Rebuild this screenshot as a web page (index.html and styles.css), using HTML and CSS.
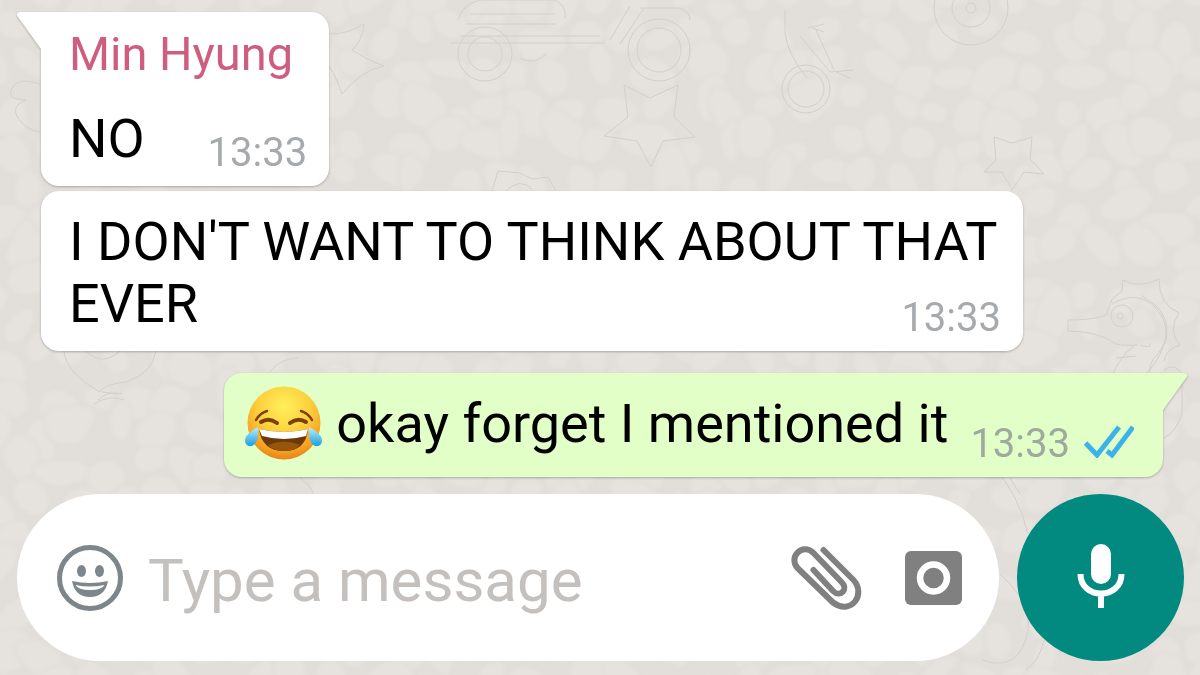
FILE: index.html
```html
<!DOCTYPE html>
<html lang="en">
<head>
    <meta charset="UTF-8">
    <meta name="viewport" content="width=device-width, initial-scale=1.0">
    <title>Chat</title>
    <link rel="stylesheet" href="styles.css">
</head>
<body>
    <!-- Wallpaper: pebbles are added by wallpaper.js, doodles sit on top -->
    <svg class="wallpaper" viewBox="0 0 1200 675" preserveAspectRatio="xMidYMid slice" aria-hidden="true">
        <g id="pebbles" class="pebbles"></g>
        <g class="doodles">
            <!-- car -->
            <path d="M450 43h155M460 36h140M458 20q4-16 22-20h75q12 6 10 18M470 14h85M466 24h90M610 40l20-34M620 44l24-36M640 8h40q10 4 10 12"/>
            <circle cx="485" cy="54" r="27"/>
            <circle cx="485" cy="54" r="17"/>
            <circle cx="659" cy="50" r="31"/>
            <circle cx="659" cy="50" r="22"/>
            <path d="M520 58q14 8 26-4"/>
            <!-- stars -->
            <path d="M624 85l26 13 28-13-4 32 21 20-32 4-12 26-14-26-33-5 24-19z"/>
            <path d="M994 137l18 6 20-6-2 22 14 15-20-2-12 18-10-18-18 0 12-12z"/>
            <!-- wheel -->
            <circle cx="971" cy="8" r="37"/>
            <circle cx="971" cy="8" r="19"/>
            <circle cx="971" cy="8" r="5"/>
            <!-- bird -->
            <circle cx="806" cy="89" r="24"/>
            <circle cx="806" cy="89" r="18"/>
            <path d="M785 10v22q2 22 22 46M800 36l30 36M816 30l18 40M808 28l16-4M812 28l12 4M830 72l24-2M836 72l14 6"/>
            <!-- fish and flowers -->
            <path d="M330 34q18 0 34-10-2 18-12 26 14 10 32 16-22 4-42 28-8-24-18-34"/>
            <path d="M40 84q-22-8-28 4t14 12q-16 6-8 18t22 14"/>
            <path d="M492 191l6-20 22 2 12 6 16-2 8 14M506 191q14-14 26-2"/>
            <!-- radish -->
            <path d="M64 351q2 22 36 41q4-8 26-10 26-8 30-31M86 351q16 16 34 0M98 400q10-10 24-6M94 404q16-10 30-4M102 392l16 2"/>
            <!-- seahorse -->
            <path d="M1068 320v11q30 0 48 13 8 2 22 1M1068 320q26 0 38-5l6-16 10-8 1-11q16 9 36-1 0 26 20 34-12 18 1 32-14 4-16 16M1112 304q24-14 42 2 22 24 4 48-10 8-8 22M1142 296q30 16 24 44-8 22-20 34M1140 345q12 4 10-2M1134 346q-14 10-22 30M1164 370q10-8 18 4v40q-6 18-18 24M1116 358l20-2"/>
            <circle cx="1122" cy="316" r="11"/>
            <circle cx="1120" cy="316" r="3"/>
            <!-- lower swirls -->
            <path d="M996 470q22 24 32 64M1000 574q42 38 22 74-12 22-40 12M1044 640q-4 20-18 30M300 477q10 8 14 17M270 372q10-14 28-14M1010 478l10 16"/>
        </g>
    </svg>

    <div class="chat-screen">
        <main class="messages">
            <article class="bubble received">
                <svg class="tail" viewBox="0 0 25 38" aria-hidden="true"><path d="M25 0H3Q-2 1 1 5L24 37V38H25z"/></svg>
                <h2 class="sender">Min Hyung</h2>
                <p class="text">NO <time class="time">13:33</time></p>
            </article>

            <article class="bubble received">
                <p class="text">I DON'T WANT TO THINK ABOUT THAT EVER <time class="time">13:33</time></p>
            </article>

            <article class="bubble sent">
                <svg class="tail" viewBox="0 0 25 38" aria-hidden="true"><path d="M0 0H22Q27 1 24 5L1 37V38H0z"/></svg>
                <p class="text">
                    <svg class="emoji" viewBox="0 0 79 74" role="img" aria-label="Face with tears of joy">
                        <defs>
                            <radialGradient id="face" cx="50%" cy="28%" r="72%">
                                <stop offset="0" stop-color="#fff05c"/>
                                <stop offset="0.5" stop-color="#fdcf3c"/>
                                <stop offset="0.85" stop-color="#f6a020"/>
                                <stop offset="1" stop-color="#e5831a"/>
                            </radialGradient>
                            <linearGradient id="tear" x1="0" y1="0" x2="0" y2="1">
                                <stop offset="0" stop-color="#b9eefc"/>
                                <stop offset="1" stop-color="#1c9ee0"/>
                            </linearGradient>
                        </defs>
                        <circle cx="40" cy="37" r="36.5" fill="url(#face)"/>
                        <path d="M15 43Q40 49 64 43Q62 65 40 65Q18 65 15 43z" fill="#6b3a08"/>
                        <path d="M15 43Q40 49 64 43L62 50Q40 56 18 50z" fill="#fff"/>
                        <path d="M24 59Q40 52 56 59Q50 65 40 65T24 59z" fill="#94570c"/>
                        <g fill="none" stroke="#7a4107" stroke-linecap="round">
                            <path d="M17 36Q25 31 33 37M46 37Q54 31 62 36" stroke-width="4"/>
                            <path d="M12 34Q16 27 23 25M57 25Q64 27 68 34" stroke-width="2.5"/>
                        </g>
                        <path d="M14 41Q15 58 8 60Q1 61 1 54Q2 47 14 41zM65 41Q64 58 71 60Q78 61 78 54Q77 47 65 41z" fill="url(#tear)"/>
                    </svg>
                    okay forget I mentioned it
                    <span class="time">
                        <time>13:33</time>
                        <svg class="ticks" viewBox="0 0 50 34" role="img" aria-label="Read"><path d="M1.500 19L13 31L35 3M23 27L28 31L49 3"/></svg>
                    </span>
                </p>
            </article>
        </main>

        <form class="composer">
            <div class="message-box">
                <button type="button" class="icon-btn" aria-label="Emoji">
                    <svg width="68" height="68" viewBox="0 0 68 68">
                        <circle cx="34" cy="34" r="30.500" fill="none" stroke="#7d878b" stroke-width="5"/>
                        <ellipse cx="25.500" cy="27" rx="4.500" ry="6" fill="#7d878b"/>
                        <ellipse cx="43.500" cy="27" rx="4.500" ry="6" fill="#7d878b"/>
                        <path d="M16 37Q34 41 52 37Q49 53 34 53T16 37z" fill="#7d878b"/>
                        <path d="M19.500 41Q34 44 48.500 41Q46 46 34 46T19.500 41z" fill="#fff"/>
                    </svg>
                </button>
                <input type="text" class="message-input" placeholder="Type a message" aria-label="Type a message">
                <button type="button" class="icon-btn" aria-label="Attach">
                    <svg width="72" height="70" viewBox="0 0 72 70" fill="none" stroke="#808080" stroke-linecap="round" stroke-linejoin="round">
                        <path d="M32.500 7L62 36.500C76 51 60 73 42 59.500L6.500 25C-3 14 11 0 22 9.500L50.500 39C58 46.500 49 55 42 48L22.500 27" stroke-width="6"/>
                    </svg>
                </button>
                <button type="button" class="icon-btn camera" aria-label="Camera">
                    <svg width="57" height="54" viewBox="0 0 57 54">
                        <rect width="57" height="54" rx="6" fill="#808080"/>
                        <circle cx="28.500" cy="27" r="13.500" fill="none" stroke="#fff" stroke-width="6.500"/>
                    </svg>
                </button>
            </div>
            <button type="button" class="mic-btn" aria-label="Record voice message">
                <svg width="48" height="68" viewBox="0 0 48 68">
                    <rect x="14" y="0" width="20" height="40" rx="10" fill="#fff"/>
                    <path d="M3.500 30C3.500 56 44.500 56 44.500 30M24 49V64" fill="none" stroke="#fff" stroke-width="6"/>
                </svg>
            </button>
        </form>
    </div>

    <script src="wallpaper.js"></script>
</body>
</html>
```
FILE: styles.css
```css
* {
    box-sizing: border-box;
}

body {
    margin: 0;
    font-family: Roboto, sans-serif;
    background-color: #e2dfda;
    color: #000;
    overflow-x: hidden;
}

/* Wallpaper */
.wallpaper {
    position: fixed;
    inset: 0;
    width: 100%;
    height: 100%;
}
.pebbles {
    fill: #e6e3de;
    stroke: #dfdcd7;
    stroke-width: 2;
    filter: blur(2px);
}
.doodles {
    fill: none;
    stroke: #d2cfca;
    stroke-width: 1;
    stroke-linejoin: round;
}

.chat-screen {
    position: relative;
    min-height: 100vh;
    display: flex;
    flex-direction: column;
}

/* Messages */
.messages {
    display: flex;
    flex-direction: column;
    align-items: flex-start;
    gap: 5px;
    padding: 12px 37px 17px 41px;
}
.bubble {
    position: relative;
    max-width: 982px;
    padding: 20px 22px 13px 28px;
    border-radius: 18px;
    background-color: #fff;
    filter: drop-shadow(0 1px 1px rgba(0, 0, 0, 0.25));
}
.bubble.sent {
    align-self: flex-end;
    margin-top: 17px;
    padding-left: 20px;
    padding-right: 29px;
    background-color: #e1ffc7;
}
.bubble:has(.tail) {
    border-top-left-radius: 0;
}
.bubble.sent:has(.tail) {
    border-top-left-radius: 18px;
    border-top-right-radius: 0;
}

/* Bubble corner pointing at the screen edge */
.tail {
    position: absolute;
    top: 0;
    left: -24px;
    width: 25px;
    height: 38px;
    fill: #fff;
}
.sent .tail {
    left: auto;
    right: -24px;
    fill: #e1ffc7;
}

.sender {
    margin: 0 0 32px;
    padding-right: 14px;
    font-size: 47px;
    line-height: 44px;
    font-weight: 400;
    color: #cf5d7d;
}
.text {
    margin: 0;
    font-size: 54px;
    line-height: 62px;
}
.time {
    float: right;
    margin: 25px 0 0 22px;
    font-size: 40px;
    line-height: 40px;
    color: #a7aaad;
}
.sent .time {
    display: flex;
    gap: 14px;
    margin-top: 31px;
    color: #9faa9f;
}
.ticks {
    width: 50px;
    height: 34px;
    fill: none;
    stroke: #3bb3ea;
    stroke-width: 5;
}
.emoji {
    width: 79px;
    height: 74px;
    margin: -16px 0 -10px;
    vertical-align: -8px;
}

/* Composer */
.composer {
    display: flex;
    gap: 18px;
    padding: 0 16px 15px 17px;
}
.message-box {
    flex: 1;
    min-width: 0;
    display: flex;
    align-items: center;
    padding: 0 37px 0 39px;
    border-radius: 84px;
    background-color: #fff;
}
.icon-btn {
    flex: none;
    display: flex;
    padding: 0;
    border: none;
    background: none;
    cursor: pointer;
}
.camera {
    margin-left: 42px;
}
.message-input {
    flex: 1;
    min-width: 0;
    height: 80px;
    margin: 0 24px;
    padding: 5px 0 0;
    border: none;
    outline: none;
    background: none;
    font-family: inherit;
    font-size: 60px;
}
.message-input::placeholder {
    color: #c4c0bd;
    opacity: 1;
}
.mic-btn {
    flex: none;
    display: flex;
    align-items: center;
    justify-content: center;
    width: 167px;
    height: 167px;
    padding: 0;
    border: none;
    border-radius: 50%;
    background-color: #038a80;
    cursor: pointer;
}
```
FILE: wallpaper.js
```js
// Fill the wallpaper with softly rounded pebbles on a loose grid
let seed = 7;
function rand() {
    seed = (seed * 16807) % 2147483647;
    return seed / 2147483647;
}

function pebblePath(cx, cy) {
    const rx = 14 + rand() * 16;
    const ry = 11 + rand() * 10;
    const turn = rand() * Math.PI;
    const points = [];
    for (let i = 0; i < 7; i++) {
        const angle = (i / 7) * Math.PI * 2;
        const wobble = 0.85 + rand() * 0.45;
        const x = Math.cos(angle) * rx * wobble;
        const y = Math.sin(angle) * ry * wobble;
        points.push([
            cx + x * Math.cos(turn) - y * Math.sin(turn),
            cy + x * Math.sin(turn) + y * Math.cos(turn)
        ]);
    }
    const mid = (a, b) => [(a[0] + b[0]) / 2, (a[1] + b[1]) / 2];
    let d = 'M' + mid(points[6], points[0]);
    points.forEach((p, i) => {
        d += 'Q' + p + ' ' + mid(p, points[(i + 1) % 7]);
    });
    return d + 'z';
}

let paths = '';
for (let row = 0; row < 20; row++) {
    for (let col = 0; col < 32; col++) {
        const x = col * 40 + (row % 2) * 20 + rand() * 26 - 13;
        const y = row * 36 + rand() * 26 - 13;
        paths += '<path d="' + pebblePath(x, y) + '"/>';
    }
}
document.getElementById('pebbles').innerHTML = paths;
```
